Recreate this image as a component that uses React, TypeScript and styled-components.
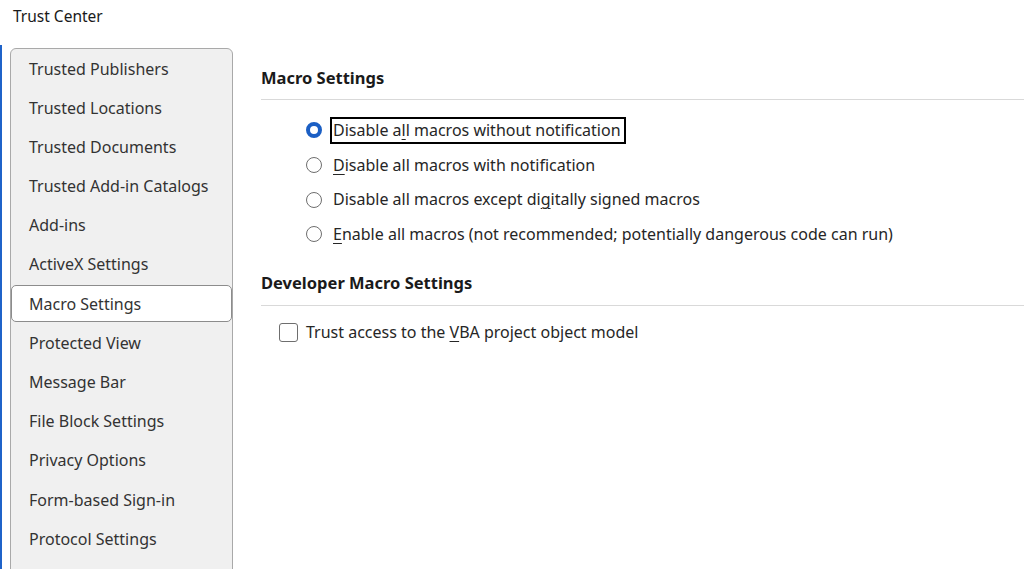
import styled, { createGlobalStyle } from 'styled-components';

const GlobalStyle = createGlobalStyle`
    html, body {
        margin: 0;
        padding: 0;
        background: #ffffff;
        overflow: hidden;
    }
    body {
        font-family: "Noto Sans", "Open Sans", sans-serif;
        color: #262626;
    }
`;

const Window = styled.div`
    width: 1024px;
    height: 569px;
    display: flex;
    flex-direction: column;
    overflow: hidden;
`;

const TitleBar = styled.div`
    height: 32px;
    flex-shrink: 0;
    padding-left: 13px;
    display: flex;
    align-items: center;
    font-size: 15.5px;
    color: #1a1a1a;
`;

const Body = styled.div`
    flex: 1;
    min-height: 0;
    display: flex;
    border-left: 2px solid #1f63c9;
    margin-top: 13px;
    padding-top: 3px;
`;

const Sidebar = styled.nav`
    width: 221px;
    margin-left: 8px;
    height: 600px;
    background: #f0f0f0;
    border: 1px solid #a9a9a9;
    border-radius: 6px;
    padding-top: 1px;
    display: flex;
    flex-direction: column;
    flex-shrink: 0;
`;

const NavItem = styled.div<{ $active?: boolean }>`
    height: 35px;
    margin: 0 0 2.2px 0;
    padding-left: 17px;
    display: flex;
    align-items: center;
    font-size: 16px;
    color: #333333;
    border: 1px solid ${p => (p.$active ? '#8c8c8c' : 'transparent')};
    border-radius: 5px;
    background: ${p => (p.$active ? '#ffffff' : 'transparent')};
`;

const Content = styled.main`
    flex: 1;
    padding-left: 28px;
    padding-top: 18px;
`;

const Section = styled.section`
    margin-bottom: 20px;
`;

const Heading = styled.h2`
    margin: 0;
    height: 22px;
    display: flex;
    align-items: center;
    font-size: 16.5px;
    font-weight: 700;
    color: #1a1a1a;
    padding-bottom: 11px;
    border-bottom: 1px solid #d9d9d9;
`;

const OptionList = styled.div<{ $indent: number; $top: number }>`
    display: flex;
    flex-direction: column;
    padding-left: ${p => p.$indent}px;
    padding-top: ${p => p.$top}px;
`;

const Option = styled.label<{ $gap: number }>`
    height: 34.7px;
    display: flex;
    align-items: center;
    gap: ${p => p.$gap}px;
    font-size: 16px;
    color: #262626;
`;

const Label = styled.span<{ $focused?: boolean }>`
    padding: 2px 3px 2px 1px;
    border: 2px solid ${p => (p.$focused ? '#000000' : 'transparent')};
    line-height: 19px;
`;

const Key = styled.span`
    text-decoration: underline;
    text-underline-offset: 3px;
`;

const Radio = styled.span<{ $checked?: boolean }>`
    width: 16px;
    height: 16px;
    box-sizing: border-box;
    border-radius: 50%;
    flex-shrink: 0;
    border: ${p => (p.$checked ? '4px solid #1b5fc4' : '1px solid #6e6e6e')};
    background: #ffffff;
`;

const Checkbox = styled.span`
    width: 19px;
    height: 19px;
    box-sizing: border-box;
    border: 1px solid #6e6e6e;
    border-radius: 3px;
    flex-shrink: 0;
    background: #ffffff;
`;

const navItems = [
    'Trusted Publishers',
    'Trusted Locations',
    'Trusted Documents',
    'Trusted Add-in Catalogs',
    'Add-ins',
    'ActiveX Settings',
    'Macro Settings',
    'Protected View',
    'Message Bar',
    'File Block Settings',
    'Privacy Options',
    'Form-based Sign-in',
    'Protocol Settings',
];

export default function App() {
    return (
        <Window>
            <GlobalStyle />
            <TitleBar>Trust Center</TitleBar>
            <Body>
                <Sidebar>
                    {navItems.map(item => (
                        <NavItem key={item} $active={item === 'Macro Settings'}>
                            {item}
                        </NavItem>
                    ))}
                </Sidebar>
                <Content>
                    <Section>
                        <Heading>Macro Settings</Heading>
                        <OptionList $indent={45} $top={13}>
                            <Option $gap={8}>
                                <Radio $checked />
                                <Label $focused>
                                    Disable a<Key>l</Key>l macros without notification
                                </Label>
                            </Option>
                            <Option $gap={8}>
                                <Radio />
                                <Label>
                                    <Key>D</Key>isable all macros with notification
                                </Label>
                            </Option>
                            <Option $gap={8}>
                                <Radio />
                                <Label>
                                    Disable all macros except di<Key>g</Key>itally signed macros
                                </Label>
                            </Option>
                            <Option $gap={8}>
                                <Radio />
                                <Label>
                                    <Key>E</Key>nable all macros (not recommended; potentially dangerous code can run)
                                </Label>
                            </Option>
                        </OptionList>
                    </Section>
                    <Section>
                        <Heading>Developer Macro Settings</Heading>
                        <OptionList $indent={18} $top={9}>
                            <Option $gap={5}>
                                <Checkbox />
                                <Label>
                                    Trust access to the <Key>V</Key>BA project object model
                                </Label>
                            </Option>
                        </OptionList>
                    </Section>
                </Content>
            </Body>
        </Window>
    );
}
